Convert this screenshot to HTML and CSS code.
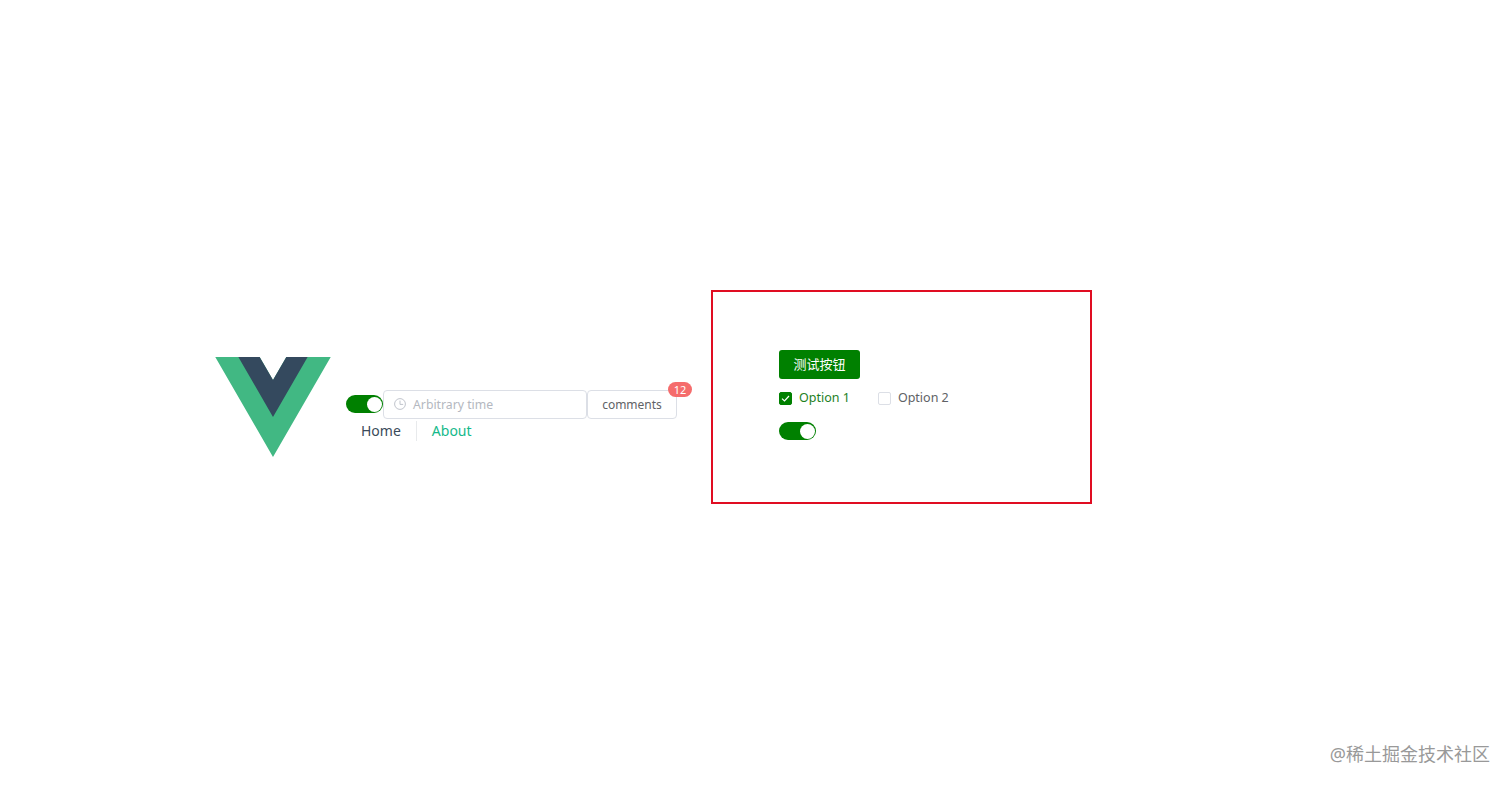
FILE: index.html
```html
<html>
<head>
<meta charset="utf-8">
<title>Vue app</title>
<link rel="stylesheet" href="styles.css">
</head>
<body>
<div class="app">
  <svg class="logo" viewBox="0 0 261.76 226.69">
    <path fill="#41b883" d="M161.096.001l-30.225 52.351L100.647.001H-.005l130.877 226.688L261.749.001z"/>
    <path fill="#34495e" d="M161.096.001l-30.225 52.351L100.647.001H52.346l78.526 136.01L209.398.001z"/>
  </svg>

  <div class="main">
    <div class="tools">
      <span class="switch"></span>
      <div class="timeInput">
        <svg class="clock" viewBox="0 0 12 12">
          <circle cx="6" cy="6" r="5.4" fill="none" stroke="#c0c4cc" stroke-width="1"/>
          <path d="M6 2.6V6.4H9.2" fill="none" stroke="#c0c4cc" stroke-width="1"/>
        </svg>
        <span>Arbitrary time</span>
      </div>
      <div class="badgeWrap">
        <button class="plainBtn">comments</button>
        <sup class="badge">12</sup>
      </div>
    </div>
    <div class="nav">
      <a class="navItem">Home</a>
      <a class="navItem active">About</a>
    </div>
  </div>

  <div class="box">
    <button class="greenBtn">测试按钮</button>
    <div class="checks">
      <label class="check on">
        <span class="tick">
          <svg viewBox="0 0 11 11"><path d="M2 5.6L4.5 8L9 3" fill="none" stroke="#fff" stroke-width="1.2"/></svg>
        </span>
        Option 1
      </label>
      <label class="check">
        <span class="tick"></span>
        Option 2
      </label>
    </div>
    <span class="switch"></span>
  </div>
</div>

<div class="mark">@稀土掘金技术社区</div>
</body>
</html>
```

FILE: styles.css
```css
* {box-sizing: border-box;}
body {margin: 0; height: 788px; overflow: hidden; background: #fff;
  font-family: "Noto Sans", "Noto Sans CJK SC", sans-serif; color: #606266;}

.app {display: flex; align-items: center; height: 794px; padding-left: 215px;}
.logo {width: 116px; height: 100px; margin-top: 20px; flex: none;}

.main {width: 331px; margin: 36px 34px 0 15px;}
.tools {display: flex; align-items: center;}

.switch {display: block; position: relative; width: 37px; height: 18px; flex: none;
  border-radius: 9px; background: green;}
.switch::after {content: ""; position: absolute; top: 1.5px; right: 1.5px;
  width: 15px; height: 15px; border-radius: 50%; background: #fff;}

.timeInput {display: flex; align-items: center; width: 204px; height: 29px; padding-left: 10px;
  border: 1px solid #dcdfe6; border-radius: 4px; font-size: 12.25px; color: #b4b8c0;}
.clock {width: 12px; height: 12px; margin-right: 7px;}

.badgeWrap {position: relative;}
.plainBtn {display: block; width: 90px; height: 29px; padding: 0; background: #fff;
  border: 1px solid #dcdfe6; border-radius: 4px; font: 12px "Noto Sans", sans-serif; color: #606266;}
.badge {position: absolute; top: -8px; right: -15px; width: 24px; height: 15px; text-align: center;
  border-radius: 8px; background: #f56c6c; color: #fff; font-size: 11px; line-height: 15px;}

.nav {display: flex; margin-top: 2px;}
.navItem {padding: 0 15px; height: 20px; font-size: 14px; line-height: 19px; color: #3a4a5a;}
.navItem + .navItem {border-left: 1px solid #e8eaec;}
.active {color: #14b98a;}

.box {width: 381px; height: 214px; padding: 58px 66px; flex: none;
  border: 2px solid #e00d22;}
.greenBtn {display: block; width: 81px; height: 29px; padding: 0 0 2px; border: 0; border-radius: 3px;
  background: green; color: #fff; font: 13px "Noto Sans CJK SC", sans-serif;}
.checks {display: flex; gap: 28px; margin: 10px 0 15px; font-size: 12.5px; line-height: 18px;}
.check {display: flex; align-items: center; gap: 7px;}
.check.on {color: #1e7f1e;}
.tick {display: block; width: 13px; height: 13px; border: 1px solid #dcdfe6; border-radius: 2px; background: #fff;}
.check.on .tick {border-color: green; background: green;}
.tick svg {display: block; width: 11px; height: 11px;}

.mark {position: absolute; right: 22px; bottom: 22px; font-size: 18px; line-height: 24px; color: #999;}
```
